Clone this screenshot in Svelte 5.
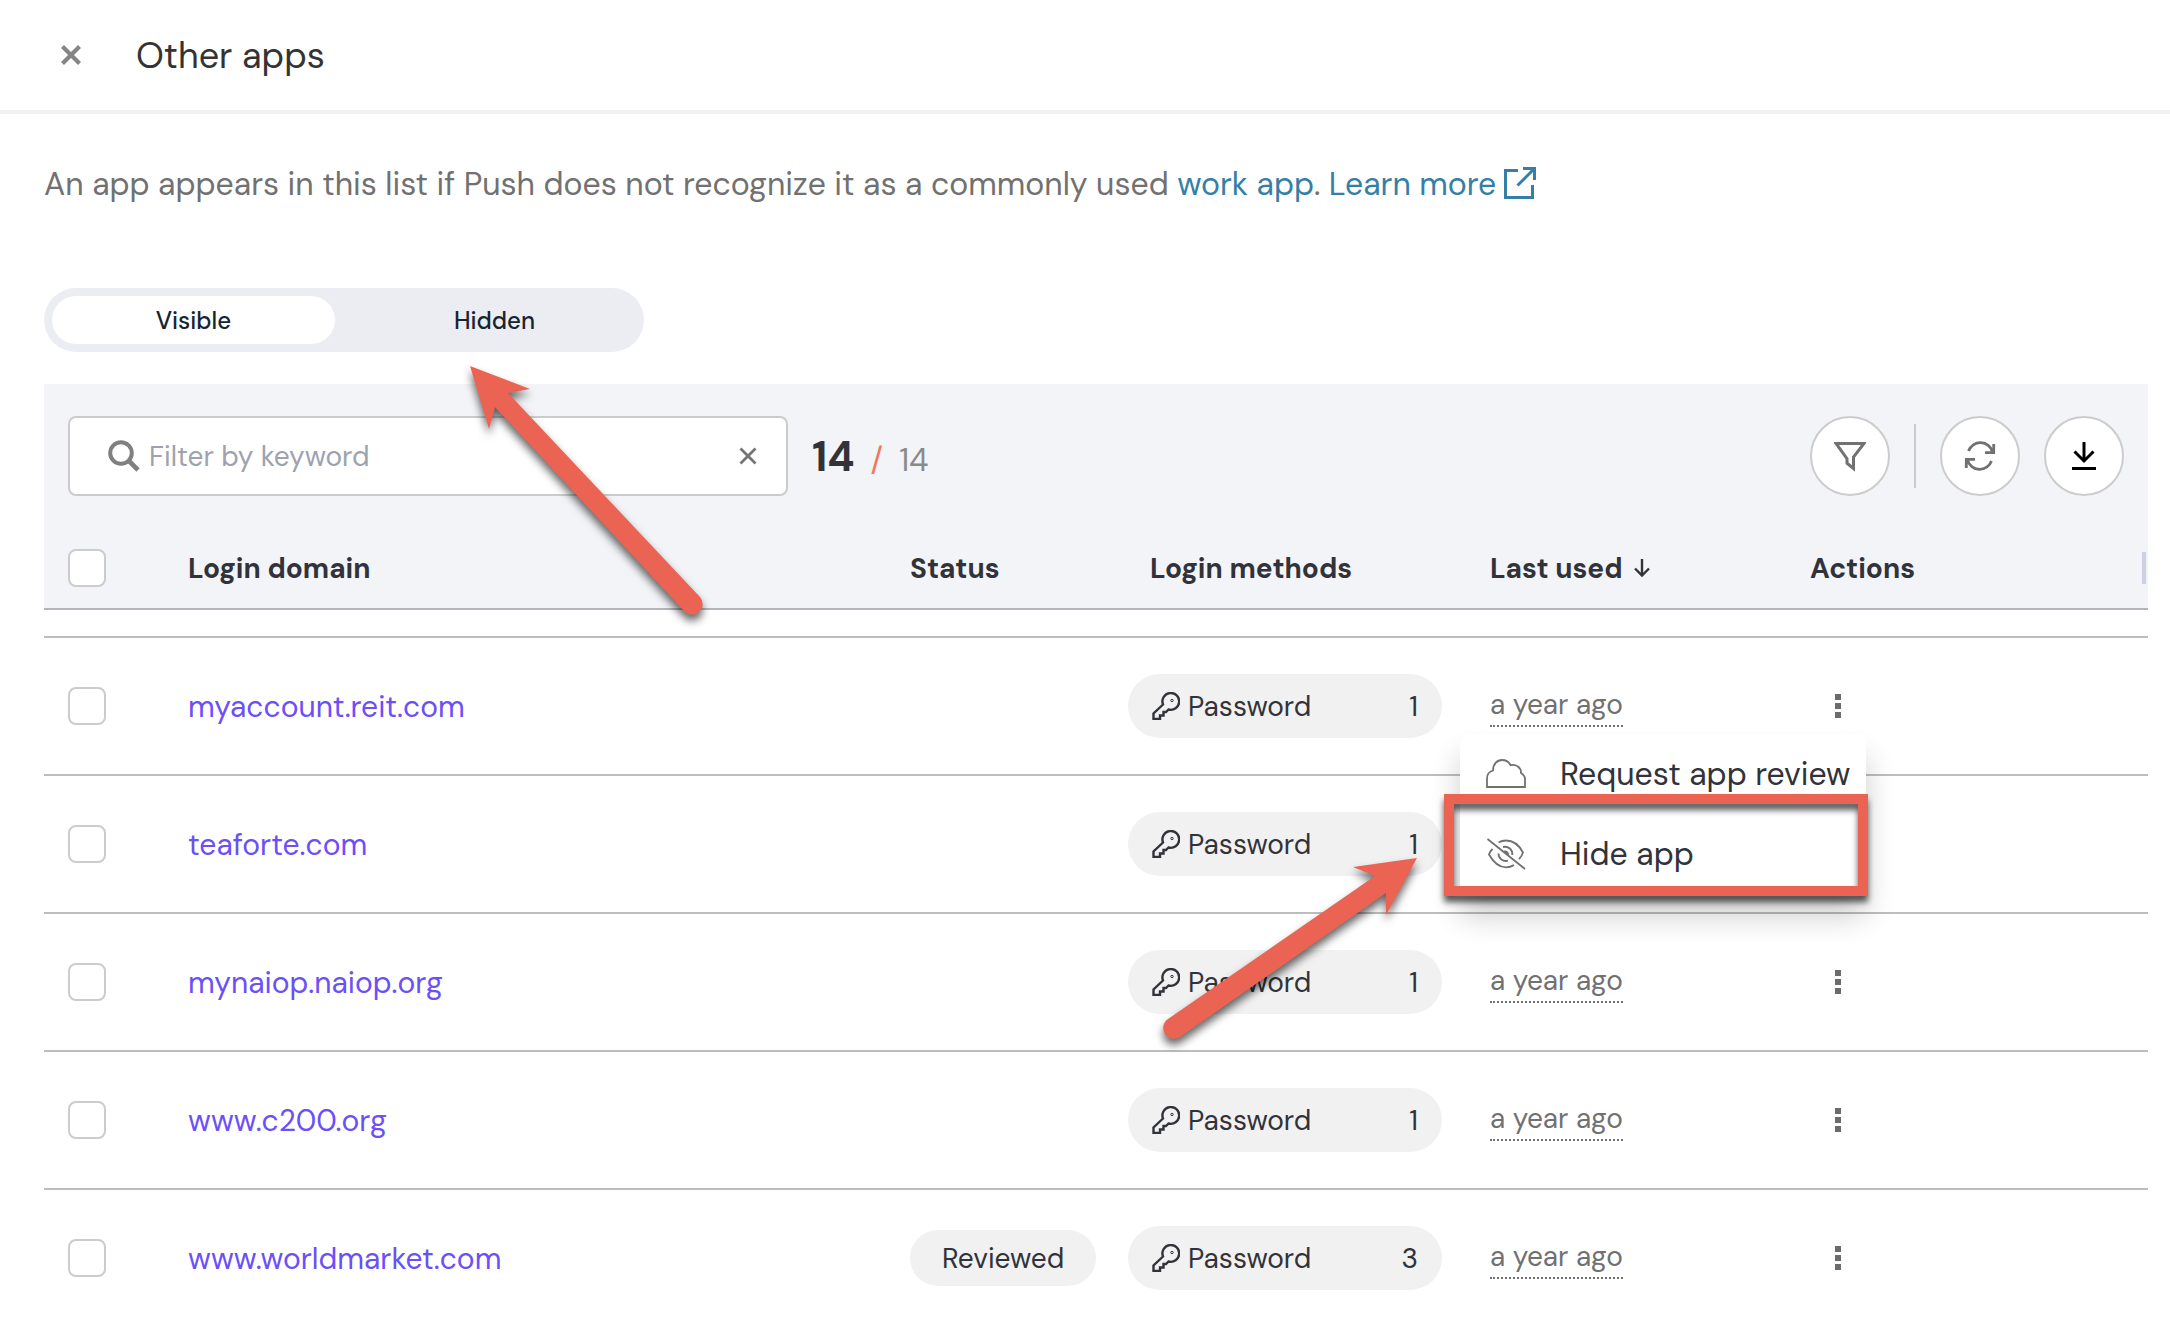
<script lang="ts">
	let tab: 'visible' | 'hidden' = 'visible';
	let keyword = '';
	let openMenu = 'myaccount.reit.com';
	let selected: string[] = [];

	const total = 14;

	const apps = [
		{ domain: 'myaccount.reit.com', status: '', logins: 1, lastUsed: 'a year ago' },
		{ domain: 'teaforte.com', status: '', logins: 1, lastUsed: 'a year ago' },
		{ domain: 'mynaiop.naiop.org', status: '', logins: 1, lastUsed: 'a year ago' },
		{ domain: 'www.c200.org', status: '', logins: 1, lastUsed: 'a year ago' },
		{ domain: 'www.worldmarket.com', status: 'Reviewed', logins: 3, lastUsed: 'a year ago' }
	];

	$: rows = apps.filter((a) => a.domain.includes(keyword.trim().toLowerCase()));

	function toggleAll(event: Event) {
		const target = event.target as HTMLInputElement;
		selected = target.checked ? rows.map((a) => a.domain) : [];
	}

	function toggleMenu(domain: string) {
		openMenu = openMenu === domain ? '' : domain;
	}
</script>

<div class="page">
	<header class="topbar">
		<button class="close" aria-label="Close">
			<svg width="20" height="20" viewBox="0 0 20 20"><path d="M1.5 1.5l17 17M18.5 1.5l-17 17" stroke-width="4.2" /></svg>
		</button>
		<h1>Other apps</h1>
	</header>

	<main>
		<p class="intro">
			An app appears in this list if Push does not recognize it as a commonly used
			<a href="#work-apps">work app</a>.
			<a href="#learn-more">Learn more<svg class="external" width="32" height="32" viewBox="0 0 32 32"><path d="M14 3.5H1.5v27h27V18M19 1.5h11.500V13M30 2L13.500 18.500" stroke-width="3" /></svg></a>
		</p>

		<div class="tabs">
			<button class:active={tab === 'visible'} on:click={() => (tab = 'visible')}>Visible</button>
			<button class:active={tab === 'hidden'} on:click={() => (tab = 'hidden')}>Hidden</button>
		</div>

		<div class="toolbar">
			<div class="search">
				<svg class="glass" width="32" height="32" viewBox="0 0 32 32"><circle cx="13" cy="13" r="10.800" stroke-width="4" /><path d="M21 21l9 9" stroke-width="4.600" /></svg>
				<input type="text" placeholder="Filter by keyword" aria-label="Filter by keyword" bind:value={keyword} />
				<button class="clear" aria-label="Clear filter" on:click={() => (keyword = '')}>
					<svg width="18" height="18" viewBox="0 0 18 18"><path d="M1.500 1.500l15 15M16.500 1.500l-15 15" stroke-width="2.800" /></svg>
				</button>
			</div>
			<div class="count"><strong>{total}</strong><span class="slash">/</span><span>{total}</span></div>
			<div class="tools">
				<button class="round" aria-label="Filter">
					<svg width="32" height="32" viewBox="0 0 32 32"><path d="M2 3.500h28L19.500 17v11.500L13 23.200v-4.500z" stroke-width="3" /></svg>
				</button>
				<span class="divider"></span>
				<button class="round" aria-label="Refresh">
					<svg width="32" height="32" viewBox="0 0 32 32"><path d="M4.500 11A12.600 12.600 0 0 1 28.500 12M29.700 4v8.700H21M27.500 21A12.600 12.600 0 0 1 3.500 20M2.300 28v-8.700H11" stroke-width="2.800" /></svg>
				</button>
				<button class="round dark" aria-label="Download">
					<svg width="32" height="32" viewBox="0 0 32 32"><path d="M16 2v18M6.500 11.500L16 21l9.500-9.500M4 28.500h24" stroke-width="3" /></svg>
				</button>
			</div>
		</div>

		<table>
			<colgroup>
				<col class="c-check" /><col /><col class="c-status" /><col class="c-methods" /><col class="c-last" /><col class="c-actions" />
			</colgroup>
			<thead>
				<tr>
					<th><input type="checkbox" aria-label="Select all" on:change={toggleAll} /></th>
					<th>Login domain</th>
					<th>Status</th>
					<th>Login methods</th>
					<th>
						<button class="sort">Last used
							<svg width="18" height="20" viewBox="0 0 18 20"><path d="M9 1v16M2 10.500l7 7 7-7" stroke-width="2.400" /></svg>
						</button>
					</th>
					<th><div class="last-head">Actions<span class="grip"></span></div></th>
				</tr>
			</thead>
			<tbody>
				<!-- tail of the row scrolled under the header -->
				<tr class="clipped"><td colspan="6"></td></tr>
				{#each rows as app}
					<tr>
						<td><input type="checkbox" aria-label="Select {app.domain}" value={app.domain} bind:group={selected} /></td>
						<td><a class="domain" href="#{app.domain}">{app.domain}</a></td>
						<td>
							{#if app.status}
								<span class="pill status">{app.status}</span>
							{/if}
						</td>
						<td class="methods">
							<span class="pill method">
								<svg width="28" height="28" viewBox="0 0 28 28"><path d="M11 12.500L1.500 21.500V27H8v-3.500h3.500V20H14l2.500-2.500A8.400 8.400 0 1 0 11 12.500z" stroke-width="2.400" /><circle cx="20" cy="8.500" r="1.200" stroke-width="1" /></svg>
								Password
								<span class="logins">{app.logins}</span>
							</span>
						</td>
						<td><span class="ago">{app.lastUsed}</span></td>
						<td>
							<div class="menu-anchor">
								<button class="kebab" aria-label="Actions for {app.domain}" on:click={() => toggleMenu(app.domain)}>
									<svg width="6" height="24" viewBox="0 0 6 24"><path d="M0 0h6v6H0zM0 9h6v6H0zM0 18h6v6H0z" /></svg>
								</button>
								{#if openMenu === app.domain}
									<div class="menu">
										<button>
											<svg width="40" height="32" viewBox="0 0 40 32"><path d="M1 29V20.500C1 16.500 3.500 13.500 7 12.500C7 6 11 2 16 2c4 0 7 2 8.500 5.200C30 6 35.200 9 35 15c2.500 1.500 4 3.500 4 6.500V29z" stroke-width="1.800" /></svg>
											Request app review
										</button>
										<button class="hide">
											<svg width="40" height="32" viewBox="0 0 40 32"><path d="M1.500 1L39 31M12.500 4.500C15 3 17.500 2.500 20 2.500c7.500 0 13 4.500 17 12c-.8 2.500-2 4.500-4 6.500M6.500 11C4.500 12.800 3.500 14.500 3 16.500c4.500 8 10 12.800 17 12.800c3 0 5.500-.8 8-2.200M17 9c5.500-1.200 9.800 2.500 9.300 8M12.500 15.500c0 5 4.500 8.500 9.500 7.200M18 13.500c3-.3 4.500 1.500 4 3.500" stroke-width="1.800" /></svg>
											Hide app
										</button>
									</div>
								{/if}
							</div>
						</td>
					</tr>
				{/each}
			</tbody>
		</table>
	</main>

	<!-- callout arrows drawn over the page -->
	<svg class="callouts" width="1440" height="1060" viewBox="0 0 1440 1060" aria-hidden="true">
		<path d="M470 366L530 389L508 393L700 597A10.500 10.500 0 0 1 684 611L495 407L489 429z" />
		<path d="M1417 858L1353 867L1375 876L1168 1019A10.500 10.500 0 0 0 1180 1037L1386 893V915z" />
	</svg>
</div>

<style>
	:global(body) {
		margin: 0;
		background: #fff;
	}

	.page {
		position: relative;
		height: 100vh;
		overflow: hidden;
		color: #32333a;
		font-family: 'DM Sans', Inter, 'Liberation Sans', sans-serif;
		font-size: 28px;
		font-optical-sizing: none;
	}

	button {
		margin: 0;
		padding: 0;
		border: none;
		background: none;
		color: inherit;
		font: inherit;
		font-optical-sizing: inherit;
		cursor: pointer;
	}

	svg {
		display: block;
		flex: none;
		fill: none;
		stroke: currentColor;
	}

	.topbar {
		display: flex;
		align-items: center;
		gap: 55px;
		height: 110px;
		padding-left: 61px;
		border-bottom: 4px solid #f1f1f1;
	}

	.close {
		color: #858585;
	}

	h1 {
		margin: 0;
		color: #333;
		font-size: 36px;
		font-weight: 400;
	}

	main {
		padding: 50px 22px 0 44px;
	}

	.intro {
		margin: 0 0 84px;
		color: #717171;
		font-size: 32px;
		line-height: 40px;
	}

	.intro a {
		color: #357fa6;
		text-decoration: none;
	}

	.external {
		display: inline-block;
		margin-left: 8px;
		vertical-align: -4px;
	}

	.tabs {
		box-sizing: border-box;
		display: flex;
		gap: 18px;
		width: 600px;
		height: 64px;
		padding: 8px;
		border-radius: 32px;
		background: #ecedf2;
	}

	.tabs button {
		flex: 1;
		border-radius: 24px;
		color: #172530;
		font-size: 24px;
		font-weight: 500;
	}

	.tabs .active {
		background: #fff;
	}

	.toolbar {
		display: flex;
		align-items: center;
		margin-top: 32px;
		padding: 32px 24px;
		background: #f3f4f8;
	}

	.search {
		box-sizing: border-box;
		display: flex;
		align-items: center;
		width: 720px;
		height: 80px;
		padding: 0 29px 0 38px;
		border: 2px solid #ccc;
		border-radius: 8px;
		background: #fff;
	}

	.glass {
		color: #808080;
	}

	.search input {
		flex: 1;
		min-width: 0;
		padding: 0 9px;
		border: none;
		outline: none;
		background: none;
		color: inherit;
		font: inherit;
		font-optical-sizing: inherit;
	}

	.search input::placeholder {
		color: #9ca3af;
		opacity: 1;
	}

	.clear {
		color: #757575;
	}

	.count {
		display: flex;
		align-items: baseline;
		gap: 16px;
		margin-left: 24px;
		color: #8a8a8a;
		font-size: 32px;
	}

	.count strong {
		color: #32333a;
		font-size: 42px;
	}

	.slash {
		color: #f0765f;
	}

	.tools {
		display: flex;
		align-items: center;
		gap: 24px;
		margin-left: auto;
	}

	.round {
		box-sizing: border-box;
		display: flex;
		align-items: center;
		justify-content: center;
		width: 80px;
		height: 80px;
		border: 2px solid #ccc;
		border-radius: 50%;
		background: #fff;
		color: #717171;
	}

	.dark {
		color: #000;
	}

	.divider {
		width: 2px;
		height: 64px;
		background: #ccc;
	}

	table {
		width: 100%;
		table-layout: fixed;
		border-collapse: separate;
		border-spacing: 0;
	}

	.c-check {
		width: 120px;
	}

	.c-status {
		width: 240px;
	}

	.c-methods {
		width: 340px;
	}

	.c-last {
		width: 320px;
	}

	.c-actions {
		width: 362px;
	}

	th,
	td {
		box-sizing: border-box;
		padding: 0 0 0 24px;
		text-align: left;
		vertical-align: middle;
	}

	th {
		height: 82px;
		border-bottom: 2px solid #b4b5ba;
		background: #f3f4f8;
		font-weight: 700;
	}

	td {
		height: 138px;
		border-bottom: 2px solid #bdbdbd;
	}

	.clipped td {
		height: 28px;
	}

	input[type='checkbox'] {
		appearance: none;
		display: block;
		width: 38px;
		height: 38px;
		margin: 0;
		border: 2px solid #ccc;
		border-radius: 8px;
		background: #fff;
	}

	input[type='checkbox']:checked {
		border-color: #6b50f8;
		background: #6b50f8;
	}

	.sort,
	.last-head {
		display: flex;
		align-items: center;
		gap: 10px;
	}

	.last-head {
		justify-content: space-between;
		padding-right: 2px;
	}

	.grip {
		width: 4px;
		height: 32px;
		background: #ccd0e0;
	}

	.domain {
		color: #6b50f8;
		font-size: 30px;
		text-decoration: none;
	}

	.pill {
		box-sizing: border-box;
		display: inline-flex;
		align-items: center;
		border-radius: 32px;
		background: #f1f1f1;
	}

	.status {
		height: 56px;
		padding: 0 32px;
	}

	.methods {
		padding-left: 2px;
	}

	.method {
		gap: 8px;
		width: 314px;
		height: 64px;
		padding: 0 24px;
	}

	.logins {
		margin-left: auto;
	}

	.ago {
		display: inline-block;
		border-bottom: 2px dotted #717171;
		color: #717171;
		line-height: 40px;
	}

	.menu-anchor {
		position: relative;
		width: 56px;
	}

	.kebab {
		display: flex;
		justify-content: center;
		width: 56px;
	}

	.kebab svg {
		fill: #6b6b6b;
		stroke: none;
	}

	.menu {
		position: absolute;
		top: 40px;
		right: 0;
		z-index: 1;
		width: 406px;
		border-radius: 8px;
		background: #fff;
		box-shadow: 0 22px 30px rgba(0, 0, 0, 0.2);
	}

	.menu button {
		display: flex;
		align-items: center;
		gap: 34px;
		width: 100%;
		height: 80px;
		padding-left: 26px;
		font-size: 32px;
		white-space: nowrap;
	}

	.menu svg {
		color: #717171;
	}

	.menu .hide {
		position: relative;
	}

	.hide::after {
		content: '';
		position: absolute;
		inset: -20px -2px -2px -16px;
		border: 10px solid #eb6453;
		filter: drop-shadow(0 6px 3px rgba(0, 0, 0, 0.65));
	}

	.callouts {
		position: absolute;
		top: 0;
		left: 0;
		z-index: 2;
		fill: #eb6453;
		stroke: none;
		filter: drop-shadow(0 6px 4px rgba(0, 0, 0, 0.6));
		pointer-events: none;
	}
</style>
